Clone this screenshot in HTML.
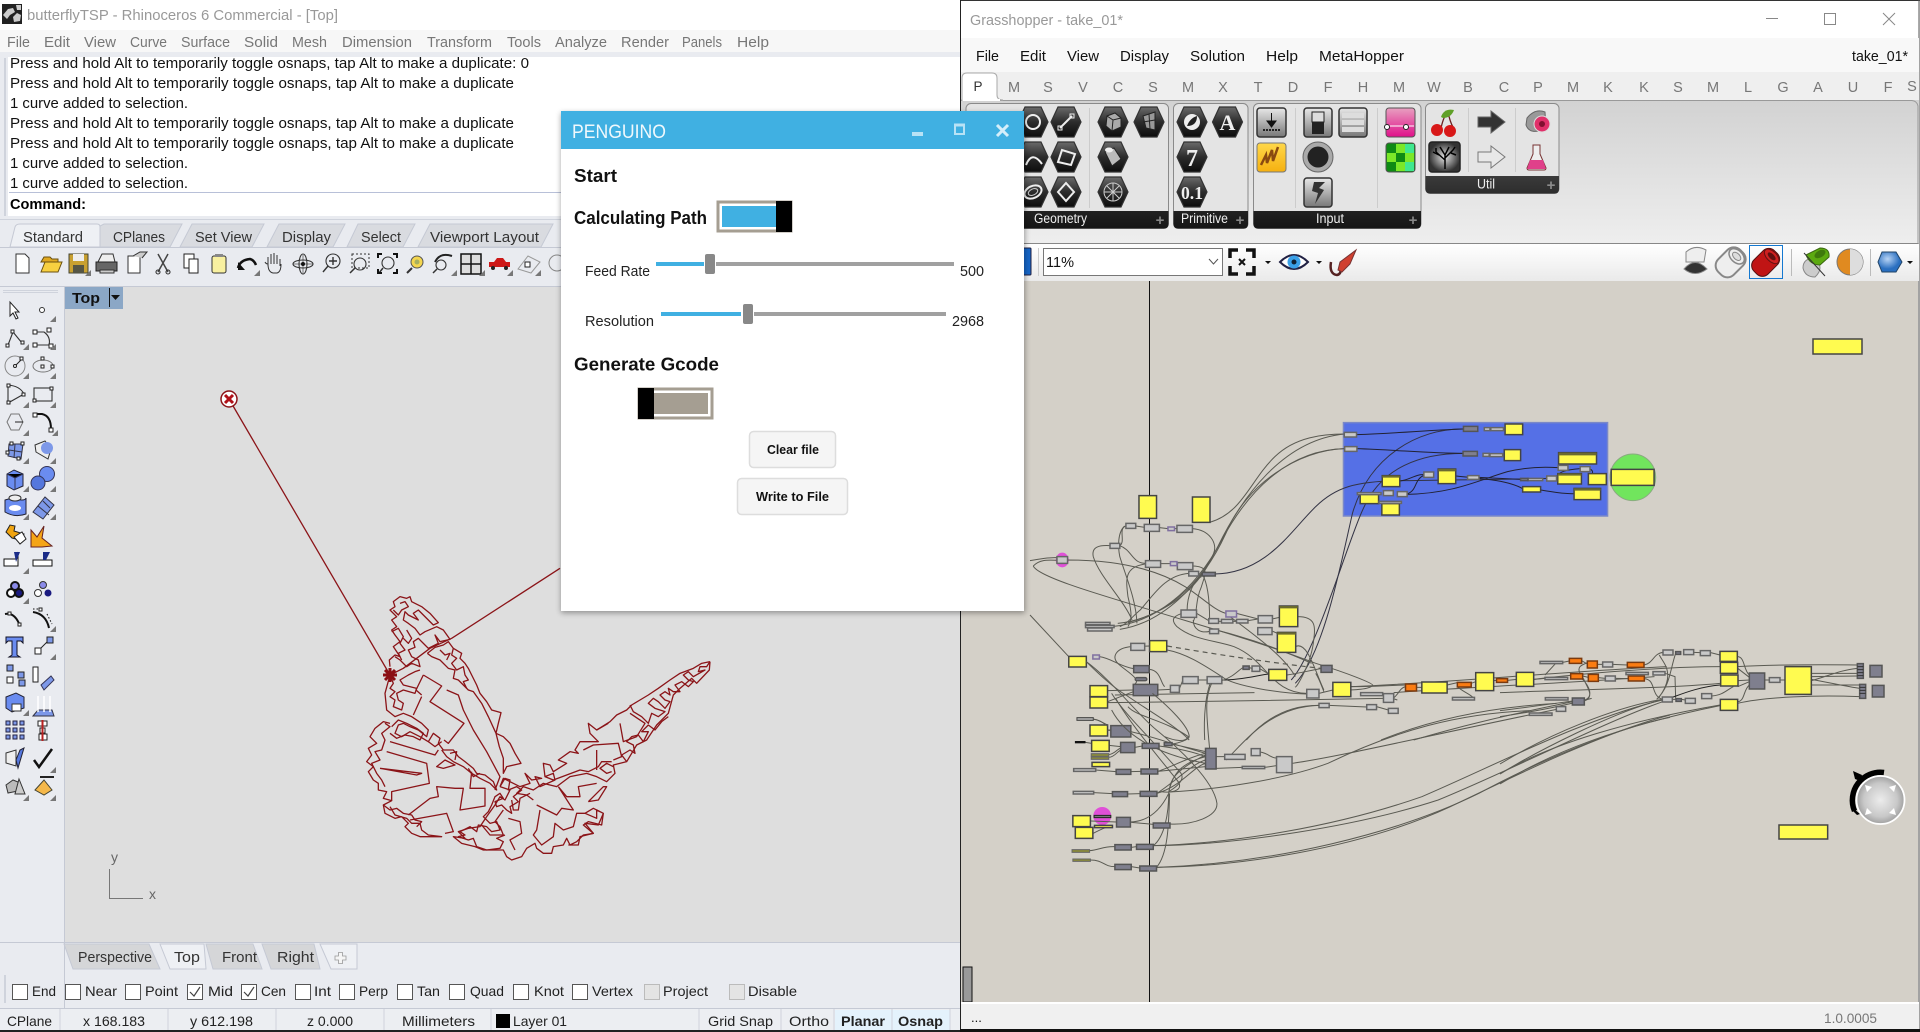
<!DOCTYPE html>
<html><head><meta charset="utf-8"><title>Rhino and Grasshopper</title>
<style>
html,body{margin:0;padding:0;background:#e9ebf0;overflow:hidden}
svg{display:block;font-family:"Liberation Sans",sans-serif}
.z *{vector-effect:non-scaling-stroke}
.w{fill:none;stroke:#5a5a52;stroke-width:1}
.y{fill:#fffb50;stroke:#444;stroke-width:1.5}
.g{fill:#c9c9c9;stroke:#666;stroke-width:1.5}
.d{fill:#7f7f8e;stroke:#555;stroke-width:1.5}
.o{fill:#fb7c12;stroke:#7a3a10;stroke-width:1.5}
.p{fill:#c9c9c9;stroke:#8070a0;stroke-width:1.5}
.n{fill:#aaa;stroke:#444;stroke-width:1}
.v{fill:#8a8a3a;stroke:#666;stroke-width:1}
.b{fill:none;stroke:#8b1418;stroke-width:1.3;stroke-linejoin:round}
.m{fill:#777;font-size:14.5px}
.c{fill:#111;font-size:14.5px}
.t{fill:#333;font-size:14.5px}
.s{fill:#222;font-size:14px}
.l{fill:#777;font-size:14.5px;text-anchor:middle}
.i{fill:none;stroke:#333;stroke-width:1.1}
.sq{fill:#fff;stroke:#222;stroke-width:1}
.cb{fill:#fff;stroke:#555;stroke-width:1}
.f{fill:#eee;font-size:13.5px}
.pl{fill:#aaa;font-size:15px;font-weight:bold}
.h{fill:url(#hx);stroke:#333;stroke-width:1.2}
.gl{fill:none;stroke:#eee;stroke-width:2}
.ic{fill:url(#sqg);stroke:#333;stroke-width:1.5}
</style></head><body>
<svg width="1920" height="1032" viewBox="0 0 1920 1032" xmlns="http://www.w3.org/2000/svg">
<defs>
<linearGradient id="hx" x1="0" y1="0" x2="0" y2="1"><stop offset="0" stop-color="#6a6a6a"/><stop offset=".5" stop-color="#2c2c2c"/><stop offset="1" stop-color="#0c0c0c"/></linearGradient>
<linearGradient id="sqg" x1="0" y1="0" x2="0" y2="1"><stop offset="0" stop-color="#e8e8e8"/><stop offset="1" stop-color="#777"/></linearGradient>
<linearGradient id="rb" x1="0" y1="0" x2="0" y2="1"><stop offset="0" stop-color="#d2d2d2"/><stop offset="1" stop-color="#eee"/></linearGradient>
<linearGradient id="ft" x1="0" y1="0" x2="0" y2="1"><stop offset="0" stop-color="#3a3a3a"/><stop offset="1" stop-color="#151515"/></linearGradient>
<linearGradient id="tb" x1="0" y1="0" x2="0" y2="1"><stop offset="0" stop-color="#fff"/><stop offset="1" stop-color="#eaeaea"/></linearGradient>
<linearGradient id="pk" x1="0" y1="0" x2="0" y2="1"><stop offset="0" stop-color="#e8a0c0"/><stop offset="1" stop-color="#e0108a"/></linearGradient>
<linearGradient id="yl" x1="0" y1="0" x2="0" y2="1"><stop offset="0" stop-color="#ffd84a"/><stop offset="1" stop-color="#f5b010"/></linearGradient>
<radialGradient id="nav"><stop offset="0" stop-color="#ececec"/><stop offset=".7" stop-color="#c8c8c8"/><stop offset="1" stop-color="#a0a0a0"/></radialGradient>
<radialGradient id="bl" cx=".4" cy=".35"><stop offset="0" stop-color="#b8d4f5"/><stop offset="1" stop-color="#2a6fc0"/></radialGradient>
<radialGradient id="tg"><stop offset="0" stop-color="#e4e4e4"/><stop offset="1" stop-color="#333"/></radialGradient>
<filter id="sh" x="-5%" y="-5%" width="110%" height="110%"><feGaussianBlur stdDeviation="3"/></filter>
<polygon id="tr" points="6,0 6,6 0,6" fill="#777"/>
<polygon id="hex" class="h" points="-15,0 -8,-15 8,-15 15,0 8,15 -8,15"/>
</defs>

<!-- RHINO WINDOW -->
<rect x="0" y="0" width="961" height="1032" fill="#e9ebf0"/>
<rect x="0" y="0" width="961" height="30" fill="#fff"/>
<rect x="0" y="30" width="961" height="22" fill="#f7f7f7"/>
<rect x="2" y="4" width="20" height="20" fill="#222"/>
<path d="M3 15L8 9L13 8L15 12L10 15L7 19Z M13 17L17 13L21 15L20 21L14 22Z M16 5H21V10L17 10Z" fill="#ccc"/>
<text x="27" y="20" font-size="15" fill="#999" textLength="311" lengthAdjust="spacingAndGlyphs">butterflyTSP - Rhinoceros 6 Commercial - [Top]</text>
<g class="m">
<text x="7" y="47" textLength="23" lengthAdjust="spacingAndGlyphs">File</text>
<text x="44" y="47" textLength="26" lengthAdjust="spacingAndGlyphs">Edit</text>
<text x="84" y="47" textLength="32" lengthAdjust="spacingAndGlyphs">View</text>
<text x="130" y="47" textLength="37" lengthAdjust="spacingAndGlyphs">Curve</text>
<text x="181" y="47" textLength="49" lengthAdjust="spacingAndGlyphs">Surface</text>
<text x="244" y="47" textLength="34" lengthAdjust="spacingAndGlyphs">Solid</text>
<text x="292" y="47" textLength="35" lengthAdjust="spacingAndGlyphs">Mesh</text>
<text x="342" y="47" textLength="70" lengthAdjust="spacingAndGlyphs">Dimension</text>
<text x="427" y="47" textLength="65" lengthAdjust="spacingAndGlyphs">Transform</text>
<text x="507" y="47" textLength="34" lengthAdjust="spacingAndGlyphs">Tools</text>
<text x="555" y="47" textLength="52" lengthAdjust="spacingAndGlyphs">Analyze</text>
<text x="621" y="47" textLength="48" lengthAdjust="spacingAndGlyphs">Render</text>
<text x="682" y="47" textLength="40" lengthAdjust="spacingAndGlyphs">Panels</text>
<text x="737" y="47" textLength="32" lengthAdjust="spacingAndGlyphs">Help</text>
</g>
<rect x="8" y="57" width="952" height="159" fill="#fff"/>
<path d="M5 58V216" stroke="#cfd3dc" stroke-width="2"/>
<g class="c">
<text x="10" y="68" textLength="519" lengthAdjust="spacingAndGlyphs">Press and hold Alt to temporarily toggle osnaps, tap Alt to make a duplicate: 0</text>
<text x="10" y="88" textLength="504" lengthAdjust="spacingAndGlyphs">Press and hold Alt to temporarily toggle osnaps, tap Alt to make a duplicate</text>
<text x="10" y="108" textLength="178" lengthAdjust="spacingAndGlyphs">1 curve added to selection.</text>
<text x="10" y="128" textLength="504" lengthAdjust="spacingAndGlyphs">Press and hold Alt to temporarily toggle osnaps, tap Alt to make a duplicate</text>
<text x="10" y="148" textLength="504" lengthAdjust="spacingAndGlyphs">Press and hold Alt to temporarily toggle osnaps, tap Alt to make a duplicate</text>
<text x="10" y="168" textLength="178" lengthAdjust="spacingAndGlyphs">1 curve added to selection.</text>
<text x="10" y="188" textLength="178" lengthAdjust="spacingAndGlyphs">1 curve added to selection.</text>
</g>
<path d="M9 192.5H960" stroke="#b8c0d8"/>
<text x="10" y="209" font-size="14.5" font-weight="bold" fill="#000" textLength="76" lengthAdjust="spacingAndGlyphs">Command:</text>
<path d="M0 219.5H960" stroke="#cfd3dc"/>
<!-- rhino tabs -->
<path d="M100 247V226L104 224H176L182 224L170 247Z M180 247L192 224H264L252 247Z M267 247L279 224H345L333 247Z M347 247L358 224H415L403 247Z M418 247L430 224H553L541 247Z" fill="#d9dbe0" stroke="#c5c9d4"/>
<path d="M10 247L15 227Q16 224 20 224H97Q100 224 100 227V247Z" fill="#eef0f4" stroke="#c5c9d4"/>
<path d="M0 247.5H960" stroke="#c5c9d4"/>
<g class="t">
<text x="23" y="242" textLength="60" lengthAdjust="spacingAndGlyphs">Standard</text>
<text x="113" y="242" textLength="52" lengthAdjust="spacingAndGlyphs">CPlanes</text>
<text x="195" y="242" textLength="57" lengthAdjust="spacingAndGlyphs">Set View</text>
<text x="282" y="242" textLength="49" lengthAdjust="spacingAndGlyphs">Display</text>
<text x="361" y="242" textLength="40" lengthAdjust="spacingAndGlyphs">Select</text>
<text x="430" y="242" textLength="109" lengthAdjust="spacingAndGlyphs">Viewport Layout</text>
</g>
<!-- rhino toolbar -->
<g>
<path d="M16 254H25L29 258V273H16Z" fill="#fff" stroke="#333"/>
<path d="M41 262L44 257H50L52 259H58V262Z" fill="#e0a820" stroke="#6a5010"/><path d="M41 272L45 262H62L58 272Z" fill="#f8d040" stroke="#6a5010"/>
<rect x="69" y="254" width="19" height="19" fill="#c8a030" stroke="#443"/><rect x="73" y="254" width="11" height="7" fill="#eee"/><rect x="73" y="265" width="11" height="8" fill="#554"/>
<use href="#tr" x="85" y="270"/>
<path d="M98 262L102 254H113L115 262Z" fill="#eee" stroke="#333"/><rect x="96" y="262" width="21" height="9" fill="#666" stroke="#222"/><rect x="100" y="270" width="14" height="3" fill="#ccc" stroke="#333"/>
<path d="M128 256H140V273H128Z" fill="#fff" stroke="#333"/><path d="M133 256L140 252H147L142 258" fill="#ccc" stroke="#333"/>
<path d="M158 254L168 272M168 254L158 272" stroke="#444" stroke-width="1.5"/><circle cx="158" cy="272" r="2" class="i"/><circle cx="168" cy="272" r="2" class="i"/>
<rect x="184" y="254" width="10" height="14" fill="#fff" stroke="#222"/><rect x="189" y="259" width="9" height="14" fill="#fff" stroke="#222"/>
<rect x="212" y="256" width="14" height="17" rx="2" fill="#f8f0a0" stroke="#333"/><rect x="215" y="254" width="8" height="3" fill="#888"/>
<path d="M238 268Q240 260 250 259Q254 260 256 265" fill="none" stroke="#111" stroke-width="2.5"/><path d="M238 262V270H245Z" fill="#111"/><use href="#tr" x="254" y="270"/>
<path d="M268 266V257M271 264V254M274 264V253M277 264V255M280 266V259M268 264Q266 264 265 262M268 264Q268 272 273 273H277Q281 272 281 264" fill="none" stroke="#333"/>
<path d="M293 264H313M303 255V273" stroke="#777"/><ellipse cx="303" cy="264" rx="10" ry="4" class="i"/><ellipse cx="303" cy="264" rx="4" ry="10" class="i"/><circle cx="303" cy="264" r="2" fill="#111"/>
<circle cx="333" cy="261" r="7" class="i"/><path d="M328 266L323 272M329 261H337M333 257V265" stroke="#333" stroke-width="1.4"/>
<circle cx="360" cy="264" r="6" class="i"/><path d="M355 268L350 273" stroke="#333" stroke-width="1.5"/><rect x="352" y="254" width="17" height="14" fill="none" stroke="#333" stroke-dasharray="2 2"/>
<circle cx="388" cy="263" r="6" class="i"/><path d="M383 268L379 273" stroke="#333" stroke-width="1.5"/><path d="M378 258V254H382M393 254H397V258M378 269V273H382M393 273H397V269" fill="none" stroke="#111" stroke-width="2"/>
<circle cx="417" cy="262" r="6" fill="#f4d650" stroke="#555"/><circle cx="417" cy="262" r="2.500" fill="#a8b060"/><path d="M412 268L407 273" stroke="#333" stroke-width="2"/>
<path d="M435 262Q440 252 452 256" fill="none" stroke="#222" stroke-width="2"/><circle cx="441" cy="265" r="5" class="i"/><path d="M437 269L433 273" stroke="#333" stroke-width="1.5"/><use href="#tr" x="451" y="270"/>
<rect x="461" y="254" width="20" height="20" fill="#ddd" stroke="#111" stroke-width="1.5"/><path d="M471 254V274M461 264H481" stroke="#111" stroke-width="1.5"/><use href="#tr" x="479" y="270"/>
<path d="M489 267V262L494 262L497 258H503L506 262H510V267Z" fill="#cc1818"/><circle cx="493" cy="268" r="2" fill="#222"/><circle cx="506" cy="268" r="2" fill="#222"/><use href="#tr" x="507" y="270"/>
<path d="M518 269L528 256L540 262L531 273Z" fill="none" stroke="#999"/><rect x="525" y="262" width="5" height="5" fill="#fff" stroke="#222"/><use href="#tr" x="535" y="270"/>
<circle cx="557" cy="263" r="8" fill="none" stroke="#888"/>
</g>
<path d="M0 286.5H960" stroke="#c5c9d4"/>

<!-- Viewport -->
<rect x="64" y="287" width="897" height="655" fill="#dedede"/>
<path d="M64.5 287V1009" stroke="#c5c9d4"/>
<path d="M0 942.5H960" stroke="#c5c9d4"/>
<rect x="65" y="287" width="58" height="22" fill="#8ba7c6"/>
<text x="72" y="303" font-size="15" font-weight="bold" fill="#111" textLength="28" lengthAdjust="spacingAndGlyphs">Top</text>
<path d="M109.5 288V307" stroke="#111"/><path d="M111 295H120L115.5 300Z" fill="#111"/>
<!-- axes -->
<path d="M109.5 869V898.5H143" fill="none" stroke="#777"/>
<text x="111" y="862" font-size="14" fill="#666">y</text>
<text x="149" y="899" font-size="14" fill="#666">x</text>
<!-- butterfly -->
<path d="M229 399L390 675" class="b"/>
<circle cx="229" cy="399" r="8" fill="#fff" stroke="#8b1418" stroke-width="1.5"/>
<path d="M225 395L233 403M233 395L225 403" stroke="#b01018" stroke-width="3"/>
<g transform="translate(340 560) scale(.33333)" class="z">
<path class="b" d="M660 25L335 235L270 265L190 325L150 345"/>
<path class="b" d="M150 320L148 300L165 285L180 290L160 260L180 245L165 225L155 210L170 200L155 180L170 170L150 150L165 140L160 125L180 110L200 115L210 110L215 125L245 140L270 160L295 188L280 195L250 165L235 150L220 160L235 180L205 165L195 155L190 180L205 190L225 205L240 225L255 215L290 200L310 210L330 238L300 245L285 225L295 250L265 265L255 255L235 235L220 245L225 262L205 270L215 290L235 300L240 320L215 310L200 320L180 300L165 290"/>
<path class="b" d="M160 150L175 165L185 150L205 140L195 125L180 130M155 215L175 205L190 230L180 250L195 270L175 280L185 300M200 210L215 235L205 250L190 235"/>
<path class="b" d="M262 280L285 262L310 255L325 245L340 265L365 280L360 295L375 310L385 325L395 345L410 375L420 400L440 425L455 450L483 458L475 490L468 520L490 530L510 550L525 580L543 610L500 620L490 640L490 595L478 560L468 520L445 470L425 430L400 395L385 390L370 375L355 360L340 355L345 330L325 325L300 300L275 290L262 280"/>
<path class="b" d="M340 265L335 285L350 295L335 310L350 330L370 320L375 345L385 360L370 365L380 385M300 270L315 285L330 280L320 300"/>
<path class="b" d="M150 345L135 400L140 450L165 470L190 460L215 470L245 490L265 510L260 530L235 510L210 500L190 490L175 495L165 520L185 530L210 515L240 530L265 545L280 520L300 535L295 550L310 570L340 570L355 590L375 605L400 625L410 640L435 645L460 665L470 690L450 670L420 655L395 640L370 620L340 605L320 590L305 570"/>
<path class="b" d="M155 500L175 480L200 490L230 505L250 520L240 540L220 530L195 525L170 535L150 520M265 545L285 560L305 545M330 580L350 575L345 600M385 625L400 650L420 640"/>
<path class="b" d="M150 345L160 370L150 385L165 395L150 410L165 420L160 440L185 450L190 430L175 420L170 400L190 390L225 400L230 385L190 375L180 360L205 345L225 335L240 330"/>
<path class="b" d="M250 345L305 378L270 425L372 490L325 550L312 540M250 345L228 390L245 405M245 410L220 465M320 390L355 405L370 450L400 510L440 575L480 650L465 690"/>
<path class="b" d="M150 490L130 485L105 505L90 530L110 550L85 565L95 585L80 605L100 620L85 635L100 660L115 670L115 690L140 695L130 715L155 722L130 735L135 760L165 775L185 770L205 790L195 800L215 820L240 830L305 830L265 825L245 810L240 790L215 790L200 775L165 765L150 740"/>
<path class="b" d="M135 490L150 500L125 520L135 540L125 570L105 575L120 600L95 610L110 640L125 660L135 680M130 735L150 750L170 745L190 760L215 765L225 780L245 785L230 800"/>
<path class="b" d="M150 545L285 585L295 570M140 575L260 610L268 670L155 695L155 722M120 625L245 640L230 645L120 625M205 765L270 715L295 710L290 680L345 685L370 685L360 750L435 738L435 685L390 685L395 635M210 780L320 760L340 815L315 820M290 620L315 600L345 615L310 625Z"/>
<path class="b" d="M1110 305L1085 310L1060 325L1020 340L990 360L955 385L925 405L900 420L875 435L860 450L830 465L810 485L770 510L745 490L750 520L775 545L720 545L705 570L715 580L690 575L655 600L680 610L640 635L630 615L610 610L615 650L640 640L645 660L600 680L585 650L605 655L575 660L555 640L570 670L540 680L510 665L490 655L480 680"/>
<path class="b" d="M1110 305L1108 330L1070 370L1055 355L1020 385L1000 405L985 460L950 495L920 540L890 555L860 605L820 615L825 640L800 665L770 650L740 640L690 650L650 680L610 670L580 690L550 680L530 700L560 705L580 720"/>
<path class="b" d="M1110 305L1100 320L1080 320L1075 335L1095 330L1060 350L1045 335L1030 345L1045 360L1060 365L1045 380L1025 365L1005 375L1020 395L1000 395L985 385L990 405L975 395L960 405L975 420L990 425L975 445L955 425L940 415L925 430L945 445L975 455L955 470L935 460L925 490L905 470L880 455L870 435"/>
<path class="b" d="M860 605L845 585L870 570L885 580L880 555L860 545L875 530L895 525L910 545L925 515L905 515L925 495L945 510L965 485L985 470M820 620L800 610L780 625L800 640L815 635M615 650L640 660L680 645L720 630L745 635L775 620L785 605L815 605"/>
<path class="b" d="M805 490L770 510M840 490L850 545L890 530L915 490L870 460M730 570L760 555L835 550L845 590L820 600M770 570L770 630M655 680L680 710L720 710L715 680L770 670M745 725L790 680L800 680L775 720L745 725M590 735L650 765L665 745L700 750L655 680"/>
<path class="b" d="M480 680L510 690L495 720L480 710L465 735L440 770L420 800L385 805L355 815L375 835L340 830L365 850L405 860L430 870L470 870L490 870L500 890L515 900L545 890L560 865L585 850L590 865L610 880L635 880L640 860L670 855L680 835L690 855L710 845L730 825L760 820L730 795L745 785L785 795L790 760L770 750L770 775L735 760L710 760L700 800L670 810L645 790L640 830L605 855L580 825L590 810L600 750M505 775L540 785L545 820L510 840L525 870"/>
<path class="b" d="M480 680L495 655L510 660L505 690L530 680L545 690L520 710L535 725L510 740L515 760L500 750L485 735L470 740L465 725L490 715L480 700L465 710L455 735L445 755L430 770L450 790L470 785L480 810L455 815L440 800L415 795L410 815L390 800L360 815L375 825L355 830L385 840L400 835L410 860L440 870L480 865L490 845L470 835L495 825"/>
<path class="b" d="M515 720L520 750L535 750L540 715L570 700M425 795L450 825L490 825L480 800L465 785L490 750M735 760L760 745L780 755M790 760L775 795L735 790L760 820L720 830L715 855L685 855"/>
</g>
<path d="M385 670L395 680M395 670L385 680M383 675H397M390 668V682" stroke="#8b0f14" stroke-width="3"/>

<!-- sidebar -->
<path d="M3 290.5H58M3 292.5H58" stroke="#cfd3dc"/>
<g>
<path d="M10 302V316L13 313L16 319L18 318L15 312H19Z" fill="#fff" stroke="#222"/>
<circle cx="42" cy="310" r="2.5" fill="#fff" stroke="#333"/><use href="#tr" x="50" y="316"/>
<path d="M8 345L13 332L22 343" class="i"/><rect x="6" y="344" width="3" height="3" class="sq"/><rect x="11" y="330" width="3" height="3" class="sq"/><rect x="21" y="341" width="3" height="3" class="sq"/><use href="#tr" x="23" y="344"/>
<path d="M36 332H44Q51 337 49 345H36" class="i"/><rect x="33" y="330" width="4" height="4" class="sq"/><rect x="47" y="328" width="4" height="4" class="sq"/><rect x="33" y="343" width="4" height="4" class="sq"/><rect x="49" y="344" width="4" height="4" class="sq"/><use href="#tr" x="50" y="344"/>
<circle cx="15" cy="366" r="10" fill="none" stroke="#888"/><path d="M15 366L22 359" stroke="#222"/><circle cx="15" cy="366" r="1.5" class="sq"/><rect x="20" y="357" width="3" height="3" class="sq"/><use href="#tr" x="23" y="373"/>
<ellipse cx="43" cy="366" rx="10" ry="6" fill="none" stroke="#777"/><rect x="41" y="357" width="3" height="3" class="sq"/><rect x="41" y="365" width="3" height="3" class="sq"/><rect x="51" y="365" width="3" height="3" class="sq"/><use href="#tr" x="50" y="373"/>
<path d="M8 385Q20 386 24 394L8 403Z" class="i"/><rect x="7" y="384" width="3" height="3" class="sq"/><rect x="22" y="393" width="3" height="3" class="sq"/><rect x="7" y="401" width="3" height="3" class="sq"/><use href="#tr" x="23" y="402"/>
<rect x="34" y="388" width="18" height="13" class="i"/><rect x="33" y="399" width="3" height="3" class="sq"/><rect x="50" y="387" width="3" height="3" class="sq"/><use href="#tr" x="50" y="402"/>
<path d="M7 422L11 414H19L23 422L19 430H11Z" fill="none" stroke="#777"/><path d="M15 422H23" stroke="#222"/><use href="#tr" x="23" y="430"/>
<path d="M35 414H42Q51 416 51 429" fill="none" stroke="#111" stroke-width="2"/><rect x="33" y="413" width="4" height="4" class="sq"/><rect x="49" y="428" width="4" height="4" class="sq"/><use href="#tr" x="52" y="430"/>
<path d="M9 444H23L21 459L8 456Z" fill="#7d98e8" stroke="#334"/><path d="M9 450L22 452M15 444L14 458" stroke="#334"/><rect x="6" y="451" width="3" height="3" class="sq"/><rect x="10" y="442" width="3" height="3" class="sq"/><rect x="21" y="442" width="3" height="3" class="sq"/><rect x="17" y="457" width="3" height="3" class="sq"/><use href="#tr" x="23" y="458"/>
<path d="M35 445L45 441L51 449L48 459L36 452Z" fill="#eee" stroke="#333"/><circle cx="47" cy="448" r="6" fill="#7d98e8"/><use href="#tr" x="50" y="458"/>
<path d="M7 474L14 470L23 474V486L14 490L7 486Z" fill="#6a8cf0" stroke="#223"/><path d="M7 474L15 478L23 474M15 478V490" stroke="#335"/><use href="#tr" x="23" y="486"/>
<circle cx="47" cy="474" r="7.5" fill="#6a8cf0" stroke="#335"/><circle cx="38" cy="483" r="7" fill="#5577dd" stroke="#335"/><use href="#tr" x="50" y="486"/>
<path d="M5 500L12 498Q25 502 26 498V514Q15 518 5 512Z" fill="#6a8cf0" stroke="#223"/><ellipse cx="15" cy="508" rx="6" ry="3" fill="#fff"/><ellipse cx="15" cy="498" rx="6" ry="3" fill="#eee" stroke="#333"/><use href="#tr" x="23" y="514"/>
<path d="M33 512L45 497L54 505L43 519Z" fill="#7d98e8" stroke="#334"/><path d="M38 506L49 515M43 501L50 508" stroke="#334"/><use href="#tr" x="50" y="514"/>
<path d="M6 532L10 525L15 526L14 531L24 534L20 540L12 538Z" fill="#f0a410" stroke="#222"/><path d="M14 537L22 532L26 539L20 544Z" fill="#fff" stroke="#222"/>
<path d="M31 547V530L37 537L44 526L42 538L52 546L42 547Z" fill="#f5a518" stroke="#622"/>
<path d="M4 559H16L18 552V566H4Z" fill="#fff" stroke="#111"/><path d="M14 552L20 552L16 562Z" fill="#1a2c88"/><use href="#tr" x="23" y="568"/>
<path d="M33 560H52V566H33Z" fill="#fff" stroke="#111"/><path d="M43 552L50 552L46 560H43Z" fill="#1a2c88"/>
<circle cx="15" cy="586" r="4" fill="#8a8ae8" stroke="#111" stroke-width="2"/><circle cx="11" cy="593" r="4" fill="#fff" stroke="#111" stroke-width="2"/><circle cx="19" cy="593" r="4" fill="#1a1a80" stroke="#111" stroke-width="2"/><use href="#tr" x="23" y="598"/>
<circle cx="43" cy="585" r="3.5" fill="#8a8ae8" stroke="#333"/><circle cx="38" cy="593" r="3.5" fill="#fff" stroke="#333"/><circle cx="48" cy="593" r="3.5" fill="#1a1a80"/>
<path d="M5 614Q15 612 20 626" fill="none" stroke="#111" stroke-width="2"/><rect x="8" y="612" width="3" height="3" class="sq"/><rect x="18" y="623" width="3" height="3" class="sq"/>
<path d="M33 612Q46 614 49 628" fill="none" stroke="#111" stroke-width="2"/><path d="M33 609H41M47 614L52 624" stroke="#111" stroke-dasharray="1.5 2"/><rect x="39" y="608" width="3" height="3" class="sq"/><use href="#tr" x="50" y="626"/>
<path d="M6 637H23V643L21 641H17V655L20 657H9L12 655V641H8L6 643Z" fill="#6a8cf0" stroke="#112"/>
<rect x="35" y="648" width="6" height="6" class="sq"/><rect x="47" y="637" width="6" height="6" fill="#7d98e8" stroke="#222"/><path d="M41 648L47 642" stroke="#222"/><use href="#tr" x="50" y="654"/>
<rect x="7" y="665" width="6" height="6" fill="#7d98e8" stroke="#222"/><rect x="18" y="672" width="6" height="6" fill="#7d98e8" stroke="#222"/><rect x="7" y="677" width="6" height="6" class="sq"/><rect x="19" y="680" width="6" height="6" fill="#7d98e8" stroke="#222"/>
<rect x="33" y="667" width="5" height="15" class="sq"/><path d="M41 685L51 676L54 680L44 690Z" fill="#7d98e8" stroke="#335"/>
<path d="M6 697L16 693L24 697V708L12 712L6 708Z" fill="#6a8cf0" stroke="#223"/><rect x="12" y="704" width="9" height="7" fill="#fff" stroke="#333"/><use href="#tr" x="23" y="710"/>
<path d="M33 716L38 710H52L54 716Z" fill="#7d98e8" stroke="#334"/><path d="M38 696V712M44 696V712M50 696V712" stroke="#fff" stroke-width="1.5"/>
<g fill="#7d98e8" stroke="#224"><rect x="6" y="721" width="4" height="4"/><rect x="13" y="721" width="4" height="4"/><rect x="20" y="721" width="4" height="4"/><rect x="6" y="728" width="4" height="4"/><rect x="13" y="728" width="4" height="4"/><rect x="20" y="728" width="4" height="4"/><rect x="6" y="735" width="4" height="4"/><rect x="13" y="735" width="4" height="4"/><rect x="20" y="735" width="4" height="4"/></g>
<rect x="38" y="721" width="9" height="5" class="sq"/><rect x="40" y="728" width="5" height="5" class="sq"/><rect x="39" y="734" width="8" height="6" class="sq"/><path d="M42.5 720V741" stroke="#b82020" stroke-width="2"/>
<path d="M6 753L16 750V766L6 763Z" fill="#eee" stroke="#333"/><path d="M16 760L20 750L24 748L18 768Z" fill="#5577dd" stroke="#223"/>
<path d="M34 760L39 767L52 749" fill="none" stroke="#111" stroke-width="2.5"/><use href="#tr" x="50" y="767"/>
<path d="M6 785L13 780L18 782V791L8 793Z" fill="#bbb" stroke="#333"/><path d="M19 779L25 794H15Z" fill="#ccc" stroke="#333"/><use href="#tr" x="23" y="795"/>
<path d="M35 790L44 780L52 790L44 795Z" fill="#f5b84a" stroke="#443"/><path d="M40 777H54" stroke="#222" stroke-width="2"/><use href="#tr" x="50" y="795"/>
</g>

<!-- bottom tabs -->
<path d="M64 944H149L160 969H73Z M206 944H253L262 969H213Z M262 944H314L320 969H271Z" fill="#d5d6d8" stroke="#c5c9d4"/>
<path d="M160 944H204L206 969H170Z M320 944H357V969H331Z" fill="#eef0f4" stroke="#c5c9d4"/>
<g class="t" fill="#444">
<text x="78" y="962" textLength="74" lengthAdjust="spacingAndGlyphs">Perspective</text>
<text x="174" y="962" textLength="26" lengthAdjust="spacingAndGlyphs">Top</text>
<text x="222" y="962" textLength="35" lengthAdjust="spacingAndGlyphs">Front</text>
<text x="277" y="962" textLength="37" lengthAdjust="spacingAndGlyphs">Right</text>
</g>
<path d="M338.500 952.500H342.500V956H346V960H342.500V963.500H338.500V960H335V956H338.500Z" fill="#f5f5f5" stroke="#999" stroke-width=".8"/>

<!-- osnaps -->
<path d="M5 975V1003" stroke="#cfd3dc" stroke-width="2"/>
<g>
<rect class="cb" x="12.5" y="984.500" width="15" height="15"/><rect class="cb" x="65.5" y="984.500" width="15" height="15"/><rect class="cb" x="125.5" y="984.500" width="15" height="15"/><rect class="cb" x="187.5" y="984.500" width="15" height="15"/><rect class="cb" x="241.5" y="984.500" width="15" height="15"/><rect class="cb" x="295.5" y="984.500" width="15" height="15"/><rect class="cb" x="339.5" y="984.500" width="15" height="15"/><rect class="cb" x="397.5" y="984.500" width="15" height="15"/><rect class="cb" x="449.5" y="984.500" width="15" height="15"/><rect class="cb" x="513.5" y="984.500" width="15" height="15"/><rect class="cb" x="572.5" y="984.500" width="15" height="15"/>
<rect x="644.5" y="984.500" width="15" height="15" fill="#e4e4e4" stroke="#bbb"/><rect x="729.5" y="984.500" width="15" height="15" fill="#e4e4e4" stroke="#bbb"/>
<path d="M190 992L194 996L200 987M244 992L248 996L254 987" fill="none" stroke="#444" stroke-width="1.2"/>
</g>
<g class="s" fill="#333">
<text x="32" y="996" textLength="24" lengthAdjust="spacingAndGlyphs">End</text>
<text x="85" y="996" textLength="32" lengthAdjust="spacingAndGlyphs">Near</text>
<text x="145" y="996" textLength="33" lengthAdjust="spacingAndGlyphs">Point</text>
<text x="208" y="996" textLength="25" lengthAdjust="spacingAndGlyphs">Mid</text>
<text x="261" y="996" textLength="25" lengthAdjust="spacingAndGlyphs">Cen</text>
<text x="314" y="996" textLength="17" lengthAdjust="spacingAndGlyphs">Int</text>
<text x="359" y="996" textLength="29" lengthAdjust="spacingAndGlyphs">Perp</text>
<text x="417" y="996" textLength="23" lengthAdjust="spacingAndGlyphs">Tan</text>
<text x="470" y="996" textLength="34" lengthAdjust="spacingAndGlyphs">Quad</text>
<text x="534" y="996" textLength="30" lengthAdjust="spacingAndGlyphs">Knot</text>
<text x="592" y="996" textLength="41" lengthAdjust="spacingAndGlyphs">Vertex</text>
<text x="663" y="996" textLength="45" lengthAdjust="spacingAndGlyphs">Project</text>
<text x="748" y="996" textLength="49" lengthAdjust="spacingAndGlyphs">Disable</text>
</g>

<!-- status bar -->
<rect x="0" y="1009" width="960" height="21" fill="#eceef2"/>
<path d="M0 1008.500H960" stroke="#c5c9d4"/>
<rect x="835" y="1010" width="115" height="20" fill="#e4f2fc"/>
<path d="M60 1009V1030M168 1009V1030M276 1009V1030M384 1009V1030M491 1009V1030M699 1009V1030M781 1009V1030M834 1009V1030M892 1009V1030M950 1009V1030" stroke="#cfd3dc"/>
<g class="s" fill="#222">
<text x="7" y="1026" textLength="45" lengthAdjust="spacingAndGlyphs">CPlane</text>
<text x="83" y="1026" textLength="62" lengthAdjust="spacingAndGlyphs">x 168.183</text>
<text x="190" y="1026" textLength="63" lengthAdjust="spacingAndGlyphs">y 612.198</text>
<text x="307" y="1026" textLength="46" lengthAdjust="spacingAndGlyphs">z 0.000</text>
<text x="402" y="1026" textLength="73" lengthAdjust="spacingAndGlyphs">Millimeters</text>
<text x="513" y="1026" textLength="54" lengthAdjust="spacingAndGlyphs">Layer 01</text>
<text x="708" y="1026" textLength="65" lengthAdjust="spacingAndGlyphs">Grid Snap</text>
<text x="789" y="1026" textLength="40" lengthAdjust="spacingAndGlyphs">Ortho</text>
<text x="841" y="1026" textLength="44" lengthAdjust="spacingAndGlyphs" font-weight="bold">Planar</text>
<text x="898" y="1026" textLength="45" lengthAdjust="spacingAndGlyphs" font-weight="bold">Osnap</text>
</g>
<rect x="496" y="1014" width="14" height="14" fill="#000"/>

<!-- GRASSHOPPER WINDOW -->
<rect x="961" y="0" width="959" height="1032" fill="#f0f0f0"/>
<rect x="961" y="1" width="958" height="37" fill="#fff"/>
<path d="M960 0.500H1920" stroke="#333"/>
<path d="M960.500 0V1032" stroke="#222"/>
<path d="M1919 0V1032" stroke="#555" stroke-width="1"/>
<text x="970" y="25" font-size="15" fill="#999" textLength="153" lengthAdjust="spacingAndGlyphs">Grasshopper - take_01*</text>
<path d="M1766 18.500H1778" stroke="#888"/><rect x="1824.500" y="13.500" width="11" height="11" fill="none" stroke="#888"/><path d="M1883 13L1895 25M1895 13L1883 25" stroke="#888"/>
<rect x="961" y="38" width="958" height="34" fill="#f8f8f8"/>
<g class="c" fill="#222">
<text x="976" y="61" textLength="23" lengthAdjust="spacingAndGlyphs">File</text>
<text x="1020" y="61" textLength="26" lengthAdjust="spacingAndGlyphs">Edit</text>
<text x="1067" y="61" textLength="32" lengthAdjust="spacingAndGlyphs">View</text>
<text x="1120" y="61" textLength="49" lengthAdjust="spacingAndGlyphs">Display</text>
<text x="1190" y="61" textLength="55" lengthAdjust="spacingAndGlyphs">Solution</text>
<text x="1266" y="61" textLength="32" lengthAdjust="spacingAndGlyphs">Help</text>
<text x="1319" y="61" textLength="85" lengthAdjust="spacingAndGlyphs">MetaHopper</text>
<text x="1852" y="61" textLength="56" lengthAdjust="spacingAndGlyphs">take_01*</text>
</g>
<rect x="961" y="72" width="958" height="28" fill="#efefef"/>
<rect x="961" y="100" width="958" height="143" fill="url(#rb)"/>
<path d="M961 100.500H1912Q1917 101 1918 106V243" fill="none" stroke="#999"/>
<path d="M962 100V78Q962 73 967 73H992Q997 73 997 78V95Q997 100 1003 100H961Z" fill="#fff" stroke="#aaa"/>
<path d="M962.500 100H1000" stroke="#fff" stroke-width="2"/>
<text x="978" y="91" font-size="13.500" fill="#333" text-anchor="middle">P</text>
<g class="l">
<text x="1014" y="92">M</text><text x="1048" y="92">S</text><text x="1083" y="92">V</text><text x="1118" y="92">C</text><text x="1153" y="92">S</text><text x="1188" y="92">M</text><text x="1223" y="92">X</text><text x="1258" y="92">T</text><text x="1293" y="92">D</text><text x="1328" y="92">F</text><text x="1363" y="92">H</text><text x="1399" y="92">M</text><text x="1434" y="92">W</text><text x="1468" y="92">B</text><text x="1504" y="92">C</text><text x="1538" y="92">P</text><text x="1573" y="92">M</text><text x="1608" y="92">K</text><text x="1644" y="92">K</text><text x="1678" y="92">S</text><text x="1713" y="92">M</text><text x="1748" y="92">L</text><text x="1783" y="92">G</text><text x="1818" y="92">A</text><text x="1853" y="92">U</text><text x="1888" y="92">F</text><text x="1912" y="91">S</text>
</g>
<!-- panels -->
<g fill="#e4e4e4" stroke="#8a8a8a">
<rect x="966" y="103.500" width="202.500" height="125" rx="5"/>
<rect x="1173.500" y="103.500" width="74.500" height="125" rx="5"/>
<rect x="1253.500" y="103.500" width="167.500" height="125" rx="5"/>
<rect x="1425.500" y="103.500" width="133.500" height="90" rx="5"/>
</g>
<path d="M966 211H1168.500V224Q1168.500 228.500 1164 228.500H970Q966 228.500 966 224Z M1173.500 211H1248V224Q1248 228.500 1244 228.500H1178Q1173.500 228.500 1173.500 224Z M1253.500 211H1421V224Q1421 228.500 1417 228.500H1258Q1253.500 228.500 1253.500 224Z M1425.500 176H1559V189Q1559 193.500 1555 193.500H1430Q1425.500 193.500 1425.500 189Z" fill="url(#ft)"/>
<g class="f">
<text x="1034" y="223" textLength="53" lengthAdjust="spacingAndGlyphs">Geometry</text>
<text x="1181" y="223" textLength="47" lengthAdjust="spacingAndGlyphs">Primitive</text>
<text x="1316" y="223" textLength="28" lengthAdjust="spacingAndGlyphs">Input</text>
<text x="1477" y="188.500" textLength="18" lengthAdjust="spacingAndGlyphs">Util</text>
</g>
<g class="pl" text-anchor="middle"><text x="1160" y="225" opacity=".75">+</text><text x="1240" y="225" opacity=".75">+</text><text x="1413" y="225" opacity=".75">+</text><text x="1551" y="190" opacity=".75">+</text></g>
<path d="M1089.500 108V208M1295.500 108V208M1377.500 108V208M1468.500 108V172M1515.500 108V172" stroke="#ccc"/>
<!-- hex icons -->
<g>
<use href="#hex" x="1033" y="122"/><circle cx="1033" cy="122" r="7" class="gl"/>
<use href="#hex" x="1066" y="122"/><path d="M1060 128L1072 116" class="gl"/><rect x="1058" y="126" width="4" height="4" fill="none" stroke="#eee"/><rect x="1070" y="114" width="4" height="4" fill="none" stroke="#eee"/>
<use href="#hex" x="1113" y="122"/><path d="M1107 116L1115 113L1121 118V127L1112 131L1106 126Z" fill="#aaa" stroke="#222"/><path d="M1107 116L1113 120L1121 118M1113 120L1112 131" stroke="#222" fill="none"/>
<use href="#hex" x="1149" y="122"/><path d="M1143 116L1155 112V130L1146 128Z" fill="#999" stroke="#222"/><path d="M1143 122L1155 120M1149 114L1150 129" stroke="#222"/>
<use href="#hex" x="1033" y="157"/><path d="M1026 165Q1032 150 1042 164" class="gl"/>
<use href="#hex" x="1066" y="157"/><path d="M1058 162L1062 150L1075 154L1071 165Z" class="gl"/>
<use href="#hex" x="1113" y="157"/><path d="M1105 152L1114 148L1121 159L1112 166Z" fill="#bbb" stroke="#222"/><ellipse cx="1109" cy="150" rx="4" ry="2.500" fill="#eee"/>
<use href="#hex" x="1033" y="192"/><ellipse cx="1033" cy="192" rx="9" ry="6" transform="rotate(-25 1033 192)" class="gl" stroke-width="1.200"/><ellipse cx="1033" cy="192" rx="5" ry="3" transform="rotate(-25 1033 192)" fill="none" stroke="#ccc"/>
<use href="#hex" x="1066" y="192"/><path d="M1066 183L1074 192L1066 201L1058 192Z" class="gl"/>
<use href="#hex" x="1113" y="192"/><circle cx="1113" cy="192" r="9" fill="none" stroke="#ccc"/><path d="M1104 192H1122M1113 183V201M1107 186L1119 198M1119 186L1107 198" stroke="#ccc"/>
<use href="#hex" x="1192" y="122"/><circle cx="1192" cy="122" r="8" fill="#eee"/><path d="M1187 126Q1190 118 1197 116Q1197 126 1187 126Z" fill="#222"/>
<use href="#hex" x="1227.500" y="122"/><text x="1227.500" y="130" font-size="22" font-family="Liberation Serif" font-weight="bold" fill="#eee" text-anchor="middle">A</text>
<use href="#hex" x="1192" y="157"/><text x="1192" y="166" font-size="24" font-family="Liberation Serif" font-weight="bold" fill="#eee" text-anchor="middle">7</text>
<use href="#hex" x="1192" y="192"/><text x="1192" y="199" font-size="18" font-family="Liberation Serif" font-weight="bold" fill="#eee" text-anchor="middle" textLength="22" lengthAdjust="spacingAndGlyphs">0.1</text>
</g>
<!-- input icons -->
<rect x="1257" y="108" width="29" height="29" rx="3" class="ic"/><path d="M1271.500 113V125M1267 121H1276L1271.500 127Z" fill="#111" stroke="#111"/><path d="M1263 130H1280" stroke="#222" stroke-width="2" stroke-dasharray="2 1"/>
<rect x="1257" y="143" width="29" height="29" rx="3" fill="url(#yl)" stroke="#777"/><path d="M1261 165L1266 155L1267 163L1272 150L1273 161L1278 147" fill="none" stroke="#8a4a10" stroke-width="2.500"/>
<rect x="1304" y="108" width="28" height="29" rx="3" class="ic"/><rect x="1312" y="112" width="12" height="22" fill="#222"/><rect x="1312" y="112" width="12" height="10" fill="#ddd" stroke="#222"/>
<rect x="1339" y="108" width="28" height="29" rx="3" class="ic"/><rect x="1342" y="113" width="22" height="5" fill="#ddd"/><rect x="1342" y="120" width="22" height="5" fill="#ddd"/><rect x="1342" y="127" width="22" height="5" fill="#ddd"/>
<circle cx="1318" cy="157" r="15" fill="#aaa" stroke="#666"/><circle cx="1318" cy="157" r="10.500" fill="#222"/>
<rect x="1304" y="178" width="28" height="29" rx="3" class="ic"/><path d="M1314 182H1325L1319 188L1324 190L1315 204L1318 193L1312 191Z" fill="#333"/>
<rect x="1386" y="108" width="29" height="29" rx="3" fill="url(#pk)" stroke="#555"/><path d="M1387 126H1414" stroke="#fff"/><circle cx="1387" cy="127" r="2.500" fill="#fff" stroke="#222"/><circle cx="1406" cy="127" r="2.500" fill="#fff" stroke="#222"/>
<rect x="1386" y="143" width="29" height="29" rx="3" fill="#0e8a14" stroke="#555"/>
<path d="M1396 144H1405V153H1396ZM1387 153H1396V162H1387ZM1405 153H1414V162H1405ZM1396 162H1405V171H1396Z" fill="#7be828"/>
<path d="M1405 144H1414V153H1405ZM1405 162H1414V171H1405Z" fill="#3fe890"/>
<!-- util icons -->
<path d="M1441 128Q1444 115 1448 112M1448 112Q1450 122 1453 127" fill="none" stroke="#6a2020" stroke-width="1.300"/><path d="M1441 117Q1444 108 1454 110Q1451 118 1443 118Z" fill="#60a028"/><circle cx="1437" cy="130" r="6" fill="#d81818"/><circle cx="1450" cy="131" r="6" fill="#d81818"/>
<path d="M1478 117H1491V111L1505 122L1491 133V127H1478Z" fill="#333" stroke="#666"/>
<path d="M1527 118Q1535 108 1545 112L1546 128Q1530 136 1526 125Z" fill="#999" stroke="#666"/><circle cx="1542" cy="124" r="8" fill="#e0306a" stroke="#ddd"/><circle cx="1542" cy="124" r="3" fill="#801030"/>
<rect x="1429" y="142" width="31" height="30" rx="3" fill="url(#tg)" stroke="#222" stroke-width="1.500"/><path d="M1445 169V154M1445 160L1436 152M1445 158L1453 150M1445 155L1440 147M1445 155L1449 147M1439 155L1433 152M1451 153L1456 155M1436 152L1436 148M1453 150L1455 147" stroke="#000" stroke-width="1.500" fill="none"/>
<path d="M1478 152H1491V146L1505 157L1491 168V162H1478Z" fill="#e8e8e8" stroke="#777"/>
<path d="M1533 145H1540V154L1546 168Q1546 170 1544 170H1529Q1527 170 1527 168L1533 154Z" fill="#eee" stroke="#733"/><path d="M1530 160H1543L1546 169H1527Z" fill="#e0408a"/>
<!-- GH toolbar -->
<rect x="961" y="244" width="958" height="37" fill="url(#tb)"/>
<path d="M961 243.500H1918" stroke="#888"/>
<rect x="1022" y="248" width="9" height="27" rx="1" fill="#1666c8" stroke="#224"/>
<path d="M1038.500 248V276" stroke="#ccc"/>
<rect x="1043.500" y="248.500" width="179" height="27" fill="#fff" stroke="#777"/>
<text x="1046" y="267" font-size="15" fill="#111" textLength="28" lengthAdjust="spacingAndGlyphs">11%</text>
<path d="M1209 259L1213.500 264L1218 259" fill="none" stroke="#555"/>
<path d="M1230 258V250H1238M1246 250H1254V258M1230 266V274H1238M1246 274H1254V266" fill="none" stroke="#111" stroke-width="3.500"/><path d="M1239 259L1245 265M1245 259L1239 265" stroke="#111" stroke-width="2"/>
<path d="M1265 261H1271L1268 264Z M1316 261H1322L1319 264Z M1907 261H1913L1910 264Z" fill="#111"/>
<path d="M1280 262Q1294 248 1308 262Q1294 276 1280 262Z" fill="#fff" stroke="#224" stroke-width="2"/><circle cx="1294" cy="262" r="6.500" fill="#3aa0e8"/><circle cx="1294" cy="262" r="2.500" fill="#123"/>
<path d="M1331 262Q1329 274 1337 275Q1342 274 1340 267" fill="none" stroke="#522" stroke-width="2.500"/><path d="M1338 270L1340 262L1356 250L1350 264L1342 272Z" fill="#d04030" stroke="#733"/>
<path d="M1686 252Q1695 244 1706 250L1704 262H1686Z" fill="#eee" stroke="#888"/><path d="M1684 269Q1695 256 1707 269Q1695 278 1684 269Z" fill="#333" stroke="#888"/>
<g transform="rotate(-45 1731 262)"><rect x="1715" y="251" width="31" height="22" rx="9" fill="#eee" stroke="#888" stroke-width="2"/><ellipse cx="1739" cy="262" rx="6" ry="9" fill="none" stroke="#888" stroke-width="1.500"/><ellipse cx="1739" cy="262" rx="3" ry="5" fill="#ddd" stroke="#888"/></g>
<rect x="1749.500" y="245.500" width="33" height="33" fill="none" stroke="#1478d0"/>
<g transform="rotate(-45 1766 262)"><rect x="1751" y="252" width="29" height="20" rx="8" fill="#c01414" stroke="#511"/><ellipse cx="1774" cy="262" rx="5" ry="9" fill="#d02020" stroke="#611"/><ellipse cx="1774" cy="262" rx="2.500" ry="5" fill="#601010"/></g>
<path d="M1791.500 249V276M1870.500 249V276" stroke="#bbb"/>
<path d="M1803 268Q1803 258 1815 258Q1825 268 1815 277Q1805 277 1803 268Z" fill="#ccc" stroke="#888"/><path d="M1806 255L1820 248Q1830 248 1829 257L1820 265Q1810 265 1806 255Z" fill="#5caa10" stroke="#3a6810"/><ellipse cx="1820" cy="254" rx="6" ry="3.500" transform="rotate(-30 1820 254)" fill="#3f7a0c"/><path d="M1804 253L1825 276" stroke="#333"/>
<circle cx="1850" cy="262" r="13" fill="#e08a20" stroke="#777"/><path d="M1850 249A13 13 0 0 1 1850 275Z" fill="#ddd"/>
<polygon points="1882,252 1896,252 1902,262 1896,272 1882,272 1878,262" fill="url(#bl)" stroke="#246"/>

<!-- CANVAS -->
<rect x="961" y="281" width="957" height="721" fill="#d4d0c8"/>
<path d="M1149.500 281V1002" stroke="#111"/>
<rect x="1813" y="339" width="49" height="15" class="y"/>
<rect x="963" y="967" width="9" height="35" fill="#999" stroke="#111"/>
<rect x="961" y="1002" width="958" height="2" fill="#fff"/>
<rect x="961" y="1004" width="958" height="25" fill="#f0f0f0"/>
<text x="971" y="1022" font-size="13" fill="#111">...</text>
<text x="1824" y="1023" font-size="14" fill="#777" textLength="53" lengthAdjust="spacingAndGlyphs">1.0.0005</text>
<rect x="960" y="1029" width="960" height="3" fill="#111"/>
<rect x="0" y="1030" width="960" height="2" fill="#222"/>

<!-- Zoom 8 region -->
<g class="z" transform="translate(1030 400) scale(.40816 .33333)">
<rect x="768" y="68" width="647" height="280" fill="#5570e6" stroke="#7a88c8" stroke-width="1.500"/>
<ellipse cx="1477" cy="232" rx="56" ry="70" fill="#71e55d" stroke="#8aaa80"/>
<ellipse cx="79" cy="480" rx="16" ry="22" fill="#e050d8"/>
<g class="w">
<path d="M440 367C520 340 540 240 600 170C650 110 720 102 770 102"/>
<path d="M215 670C300 660 400 590 460 440C520 290 620 120 770 102"/>
<path d="M200 680C300 670 400 580 470 420C540 260 640 150 770 146"/>
<path d="M220 688C320 670 420 560 480 400C530 250 660 150 770 146"/>
<path d="M452 522C580 520 640 390 700 320C750 260 800 245 900 242C1040 240 1200 238 1266 235" stroke="#334"/>
<path d="M650 850C720 760 760 500 790 340C830 170 950 85 1062 87" stroke="#334"/>
<path d="M640 840C700 760 780 420 815 330C860 200 960 160 1061 160" stroke="#334"/>
<path d="M800 104C900 100 980 90 1062 87" stroke="#223"/>
<path d="M800 146C900 150 980 160 1061 160" stroke="#223"/>
<path d="M906 243C930 240 945 222 965 224" stroke="#223"/>
<path d="M924 282C950 270 940 240 965 226" stroke="#223"/>
<path d="M924 283C1040 280 1100 240 1170 215C1220 200 1260 200 1294 203" stroke="#223"/>
<path d="M1043 228C1100 235 1170 240 1207 266" stroke="#223"/>
<path d="M1251 270C1280 275 1300 282 1333 281" stroke="#223"/>
<path d="M1100 232L1202 238" stroke="#223"/>
<path d="M1290 228C1300 215 1310 210 1348 206M1372 207C1385 215 1375 225 1368 233" stroke="#223"/>
<path d="M0 482C30 475 50 472 66 473"/>
<path d="M8 498C30 470 60 485 92 480C200 480 300 500 380 560C420 590 450 630 480 640"/>
<path d="M8 498C20 530 160 580 290 628C400 670 550 720 700 790C780 820 840 850 840 856C830 870 790 870 740 872"/>
<path d="M155 470C150 440 170 435 196 437"/>
<path d="M155 470C170 530 230 600 250 660"/>
<path d="M220 437C235 425 215 385 235 378"/>
<path d="M220 437C250 450 250 490 283 490"/>
<path d="M232 378C215 395 215 440 220 470C235 530 260 600 262 670"/>
<path d="M259 378L280 382M317 383L338 386M354 386L360 386M317 491L344 491M360 494L361 496"/>
<path d="M398 386C440 390 460 430 450 460C430 520 380 620 240 668"/>
<path d="M399 498C440 500 430 520 420 560C405 600 410 640 400 665"/>
<path d="M283 492C230 500 235 540 240 590C250 640 250 660 240 680"/>
<path d="M389 520C330 525 300 590 270 630C250 650 240 670 220 680"/>
<path d="M422 522C440 560 440 640 440 657"/>
<path d="M385 630C385 590 400 540 420 530"/>
<path d="M370 641C350 650 345 660 360 680C400 720 450 720 500 740C560 770 580 830 620 860C640 875 660 880 678 880"/>
<path d="M408 640L438 662M400 660C400 690 420 700 440 694M462 664L469 664M497 664L506 664M534 662L559 657M506 640L559 657M593 657L611 652M593 693L606 700"/>
<path d="M462 692C520 710 600 740 690 790"/>
<path d="M656 650C700 650 700 680 695 720C690 790 650 870 650 860"/>
<path d="M650 740C680 720 700 820 720 870"/>
<path d="M480 640C520 680 620 760 650 830"/>
<path d="M250 740L293 738"/>
<path d="M336 738C440 760 600 790 713 805" stroke-dasharray="5 4" stroke-width="1.200"/>
<path d="M336 750C380 760 420 790 470 830C500 860 620 880 678 882"/>
<path d="M247 740C210 745 200 770 215 790C230 810 280 840 253 855"/>
<path d="M170 770C200 775 220 800 254 806"/>
<path d="M292 808C320 810 320 850 330 860"/>
<path d="M138 785C150 800 200 860 235 885C300 940 360 980 390 1020"/>
<path d="M0 645L95 770"/>
<path d="M190 872L253 870M190 905L253 875"/>
<path d="M208 885L550 878M190 908C400 905 700 900 866 895"/>
<path d="M313 870L344 868M366 866L374 842M412 840L434 840"/>
<path d="M470 840C520 840 560 825 585 822" stroke="#222"/>
<path d="M470 842C500 830 510 810 522 803M537 803L544 805M563 806L585 822"/>
<path d="M629 825C660 820 690 810 713 806M700 820C710 840 715 860 720 875M708 880L742 870"/>
<path d="M786 860C850 860 900 855 920 855"/>
<path d="M445 840C430 880 425 950 428 1020"/>
<path d="M530 1020C580 950 640 915 708 916M733 916L825 921M849 920L878 930M864 885L900 900M890 895C905 880 905 865 920 860"/>
<path d="M1022 855L1047 848M1081 850L1092 845M947 862L960 862M1136 842L1143 841M1170 841L1192 838M1047 860C1060 875 1075 880 1085 892"/>
<path d="M786 860C1000 850 1300 815 1560 800"/>
<path d="M891 878C1100 860 1300 850 1530 830"/>
<path d="M860 1020C1000 950 1150 920 1290 910"/>
<path d="M940 1020C1050 980 1150 950 1330 905"/>
<path d="M190 990L198 990M155 957C170 960 180 970 190 975"/>
</g>
<g class="y">
<rect x="267" y="287" width="43" height="68"/><rect x="398" y="291" width="43" height="76"/><rect x="611" y="618" width="45" height="62"/><rect x="606" y="697" width="45" height="60"/><rect x="293" y="722" width="42" height="33"/><rect x="95" y="769" width="43" height="32"/><rect x="585" y="808" width="44" height="33"/><rect x="742" y="847" width="44" height="43"/><rect x="960" y="846" width="62" height="33"/><rect x="1092" y="818" width="44" height="54"/><rect x="147" y="857" width="43" height="33"/><rect x="147" y="891" width="43" height="33"/><rect x="147" y="975" width="43" height="33"/>
<rect x="1164" y="72" width="43" height="32"/><rect x="1162" y="149" width="40" height="33"/><rect x="1295" y="158" width="93" height="34"/><rect x="1000" y="207" width="43" height="44"/><rect x="863" y="227" width="43" height="33"/><rect x="1293" y="221" width="58" height="31"/><rect x="1368" y="221" width="44" height="33"/><rect x="1207" y="260" width="44" height="16"/><rect x="1333" y="265" width="65" height="34"/><rect x="809" y="283" width="45" height="28"/><rect x="862" y="311" width="43" height="34"/><rect x="1424" y="208" width="105" height="48"/>
</g>
<path d="M611 618H656V625H611ZM606 697H651V704H606ZM1295 158H1388V166H1295ZM1000 207H1043V214H1000ZM863 227H906V233H863ZM1293 221H1351V227H1293ZM1333 265H1398V272H1333Z" fill="#6a6a30"/>
<g class="g">
<rect x="770" y="97" width="30" height="14"/><rect x="771" y="140" width="30" height="14"/><rect x="1113" y="83" width="14" height="9"/><rect x="1129" y="83" width="31" height="9"/><rect x="1110" y="160" width="15" height="9"/><rect x="1127" y="161" width="31" height="9"/><rect x="965" y="216" width="24" height="16"/><rect x="1072" y="227" width="28" height="11"/><rect x="1266" y="228" width="24" height="15"/><rect x="1294" y="196" width="24" height="15"/><rect x="1348" y="200" width="24" height="15"/><rect x="866" y="272" width="24" height="15"/><rect x="900" y="275" width="24" height="15"/><rect x="1220" y="235" width="36" height="7"/><rect x="802" y="278" width="58" height="6"/><rect x="855" y="304" width="55" height="6"/>
<rect x="235" y="370" width="24" height="15"/><rect x="280" y="373" width="37" height="21"/><rect x="360" y="376" width="38" height="21"/><rect x="196" y="430" width="24" height="15"/><rect x="283" y="482" width="37" height="20"/><rect x="361" y="488" width="38" height="21"/><rect x="389" y="514" width="24" height="14"/><rect x="66" y="470" width="26" height="20"/>
<rect x="370" y="630" width="38" height="22"/><rect x="438" y="656" width="24" height="14"/><rect x="469" y="658" width="28" height="11"/><rect x="506" y="658" width="28" height="11"/><rect x="559" y="647" width="35" height="22"/><rect x="440" y="687" width="22" height="14"/><rect x="558" y="683" width="35" height="21"/><rect x="247" y="730" width="34" height="21"/><rect x="344" y="856" width="22" height="21"/><rect x="374" y="830" width="38" height="21"/><rect x="434" y="830" width="36" height="21"/><rect x="544" y="798" width="19" height="16"/><rect x="678" y="868" width="30" height="26"/><rect x="708" y="910" width="25" height="13"/><rect x="825" y="914" width="24" height="15"/><rect x="878" y="925" width="24" height="15"/><rect x="866" y="881" width="25" height="26"/><rect x="136" y="667" width="60" height="7"/><rect x="136" y="676" width="70" height="7"/><rect x="141" y="684" width="60" height="9"/><rect x="810" y="878" width="54" height="9"/><rect x="1035" y="892" width="54" height="8"/>
</g>
<g class="p"><rect x="338" y="381" width="16" height="11"/><rect x="344" y="485" width="16" height="12"/><rect x="480" y="633" width="26" height="18"/><rect x="154" y="765" width="16" height="12"/></g>
<g class="d">
<rect x="1062" y="79" width="35" height="15"/><rect x="1061" y="154" width="35" height="14"/><rect x="422" y="517" width="32" height="11"/><rect x="254" y="797" width="38" height="21"/><rect x="258" y="833" width="28" height="9" rx="4"/><rect x="253" y="853" width="60" height="34"/><rect x="522" y="798" width="15" height="10"/><rect x="713" y="796" width="27" height="21"/><rect x="198" y="977" width="49" height="34"/><rect x="1202" y="235" width="18" height="7"/>
</g>
<g class="o"><rect x="920" y="852" width="27" height="21"/><rect x="1047" y="847" width="34" height="14"/><rect x="1143" y="836" width="27" height="11"/></g>
<rect x="115" y="953" width="40" height="8" class="n"/>
</g>

<!-- Zoom 9 region -->
<g class="z" transform="translate(1030 640) scale(.40816 .33333)">
<ellipse cx="177" cy="528" rx="22" ry="27" fill="#e050d8"/>
<g class="w">
<path d="M200 160C230 220 300 300 370 400C380 420 360 440 340 455"/>
<path d="M210 175C240 240 300 330 360 420C380 450 350 460 320 455"/>
<path d="M240 200C260 230 330 240 388 290C380 310 350 300 330 290"/>
<path d="M300 160C340 200 390 260 390 290C390 300 360 310 350 312"/>
<path d="M138 65C200 120 260 220 310 270C360 320 450 420 458 490C460 530 400 555 343 552"/>
<path d="M200 210C230 280 300 340 430 370"/>
<path d="M316 318C360 325 400 335 430 350M313 394L430 380M313 394C350 380 390 350 430 340M311 460C360 420 400 370 430 360M311 460C370 440 400 380 430 370M340 456C350 400 370 370 430 350M340 456C345 430 340 400 430 345"/>
<path d="M247 275C300 290 330 305 430 340M257 322L275 318M348 312L430 335M456 350L477 350"/>
<path d="M440 325C430 200 430 170 445 130"/>
<path d="M480 360C530 300 590 200 708 196"/>
<path d="M575 382L604 377M456 385L520 382M564 336C585 340 590 355 604 354"/>
<path d="M642 370C760 350 1000 280 1290 208"/>
<path d="M340 456C450 450 620 420 730 370C900 270 1050 220 1224 212"/>
<path d="M302 617C500 610 750 560 960 470C1150 370 1350 240 1548 180"/>
<path d="M302 617C500 615 800 560 1000 480C1180 390 1400 250 1550 185"/>
<path d="M310 682C500 680 800 630 1030 500C1200 400 1400 280 1568 225"/>
<path d="M310 682C600 670 900 580 1100 460C1250 360 1450 260 1568 232"/>
<path d="M302 617C330 590 340 520 340 456M310 682C340 640 340 540 342 460M245 546C290 545 320 510 340 460M248 547L302 553M149 543L212 546"/>
<path d="M248 622L261 620M146 632C170 630 180 618 208 620M148 660C180 660 180 680 208 680M248 680L269 684"/>
<path d="M160 390L211 395M247 395L272 394M156 458L202 461M239 462L270 461"/>
<path d="M190 271L198 271M155 238C170 238 180 250 190 258M136 307L151 310M194 316L222 320M194 344C210 340 215 325 222 325M194 352C210 350 215 330 225 330M155 580C170 570 180 565 190 560"/>
</g>
<g class="y"><rect x="151" y="301" width="43" height="33"/><rect x="152" y="367" width="43" height="13"/><rect x="105" y="527" width="43" height="33"/><rect x="111" y="562" width="43" height="33"/><rect x="158" y="556" width="44" height="7"/></g>
<g class="v"><rect x="150" y="341" width="43" height="8"/><rect x="150" y="351" width="43" height="7"/><rect x="103" y="629" width="43" height="8"/><rect x="105" y="657" width="43" height="7"/></g>
<g class="d"><rect x="222" y="307" width="35" height="31"/><rect x="275" y="310" width="41" height="15"/><rect x="329" y="308" width="19" height="9"/><rect x="211" y="388" width="36" height="15"/><rect x="272" y="387" width="41" height="15"/><rect x="430" y="325" width="26" height="62"/><rect x="202" y="455" width="37" height="15"/><rect x="270" y="454" width="41" height="15"/><rect x="212" y="532" width="34" height="29"/><rect x="302" y="549" width="41" height="15"/><rect x="208" y="614" width="40" height="16"/><rect x="261" y="613" width="41" height="15"/><rect x="208" y="673" width="40" height="16"/><rect x="269" y="678" width="41" height="15"/></g>
<g class="g"><rect x="477" y="343" width="50" height="15"/><rect x="542" y="326" width="22" height="21"/><rect x="604" y="350" width="38" height="48"/><rect x="520" y="379" width="55" height="7"/><rect x="107" y="386" width="54" height="8"/><rect x="106" y="454" width="50" height="8"/></g>
<rect x="110" y="303" width="26" height="7" fill="#111"/><rect x="157" y="526" width="41" height="7" fill="#777" stroke="#222"/>
</g>

<!-- Zoom 10 region -->
<g class="z" transform="translate(1500 620) scale(.33333)">
<g class="w">
<path d="M101 178C250 160 500 140 660 140"/>
<path d="M0 218C200 210 500 205 660 190"/>
<path d="M0 272C100 260 200 245 255 238"/>
<path d="M0 290C100 275 200 255 275 235"/>
<path d="M102 178L135 175M135 165L170 127M188 127L208 123M245 122L262 132M292 133L308 133M338 133L382 135"/>
<path d="M432 135C460 130 460 100 489 97"/>
<path d="M248 168L265 172M295 173L316 175M346 175L385 176"/>
<path d="M433 176C470 180 450 225 487 238"/>
<path d="M240 160C230 140 245 135 262 128M245 175C270 200 280 230 255 240M250 175C260 200 285 230 255 242"/>
<path d="M517 238L528 238M545 238L556 240M495 160L525 170L527 236M478 105C490 130 530 160 475 235M527 100C510 150 510 200 470 238M580 97L601 98M632 98L660 105"/>
<path d="M635 228C670 225 680 210 700 200"/>
<path d="M660 195C600 200 550 220 517 232" stroke="#222"/>
<path d="M712 110C735 110 730 150 748 165M715 182L748 180M713 145L748 172M715 245C735 240 730 210 748 195M794 180L808 180M840 180L855 180M713 200L748 185"/>
<path d="M712 140C800 135 900 133 1072 135M712 250C800 230 950 225 1079 230M934 170L1072 168M934 160L1072 160M934 182C980 170 1020 150 1072 145M934 178C1000 190 1040 200 1079 205M934 195L1079 195"/>
<path d="M0 432C150 340 350 260 487 238"/>
<path d="M0 462C100 400 350 270 487 240"/>
<path d="M0 462C150 370 400 300 660 255"/>
<path d="M0 492C150 400 350 320 660 257"/>
</g>
<g class="y"><rect x="49" y="157" width="52" height="42"/><rect x="660" y="94" width="52" height="30"/><rect x="661" y="127" width="52" height="33"/><rect x="662" y="165" width="52" height="33"/><rect x="661" y="238" width="52" height="33"/><rect x="855" y="140" width="79" height="83"/><rect x="837" y="615" width="146" height="42"/></g>
<g class="o"><rect x="382" y="127" width="50" height="15"/><rect x="385" y="168" width="48" height="15"/><rect x="262" y="123" width="30" height="21"/><rect x="265" y="163" width="30" height="21"/><rect x="208" y="115" width="37" height="15"/><rect x="212" y="161" width="36" height="16"/></g>
<g class="g"><rect x="489" y="90" width="30" height="15"/><rect x="551" y="89" width="30" height="15"/><rect x="601" y="92" width="30" height="15"/><rect x="487" y="231" width="30" height="15"/><rect x="556" y="235" width="30" height="15"/><rect x="605" y="221" width="30" height="15"/><rect x="459" y="155" width="36" height="10"/><rect x="378" y="157" width="67" height="7"/><rect x="308" y="126" width="30" height="15"/><rect x="316" y="168" width="30" height="15"/><rect x="120" y="124" width="68" height="7"/><rect x="135" y="172" width="68" height="7"/><rect x="136" y="233" width="68" height="7"/><rect x="169" y="260" width="28" height="14"/><rect x="88" y="279" width="68" height="7"/><rect x="808" y="173" width="32" height="14"/></g>
<g class="d"><rect x="527" y="95" width="15" height="8"/><rect x="528" y="236" width="16" height="8"/><rect x="217" y="234" width="36" height="21"/><rect x="748" y="159" width="46" height="48"/><rect x="1072" y="131" width="18" height="44"/><rect x="1110" y="136" width="36" height="35"/><rect x="1079" y="193" width="18" height="42"/><rect x="1117" y="196" width="35" height="35"/></g>
<path d="M1072 140H1090M1072 149H1090M1072 158H1090M1072 167H1090M1079 202H1097M1079 211H1097M1079 220H1097" stroke="#333"/>
</g>
<!-- nav widget -->
<path d="M1854.500 811A28 28 0 0 1 1884 772.500" fill="none" stroke="#000" stroke-width="5.500"/>
<path d="M1853 771L1862 775L1860 781L1855 779Z M1853 808L1860 814L1857 815L1853 811Z" fill="#000"/>
<circle cx="1880.500" cy="800" r="24" fill="url(#nav)" stroke="#fff" stroke-width="1.800"/>
<path d="M1865 785L1872 787L1867 792Z M1896 785L1889 787L1894 792Z M1865 815L1872 813L1867 808Z M1896 815L1889 813L1894 808Z" fill="#fff"/>

<!-- PENGUINO DIALOG -->
<rect x="561" y="113" width="464" height="500" fill="#000" opacity=".35" filter="url(#sh)"/>
<rect x="561" y="111" width="463" height="500" fill="#fff"/>
<rect x="561" y="111" width="463" height="38" fill="#40b0e2"/>
<text x="572" y="138" font-size="19" fill="#fff" opacity=".92" textLength="94" lengthAdjust="spacingAndGlyphs">PENGUINO</text>
<rect x="912" y="132" width="11" height="4" fill="#b8e2f5"/>
<rect x="955" y="125" width="9" height="9" fill="#40b0e2" stroke="#b8e2f5" stroke-width="2"/><path d="M954 125H965" stroke="#b8e2f5" stroke-width="3"/>
<path d="M997 125L1008 136M1008 125L997 136" stroke="#d4eefa" stroke-width="3"/>
<text x="574" y="182" font-size="18" font-weight="bold" fill="#111" textLength="43" lengthAdjust="spacingAndGlyphs">Start</text>
<text x="574" y="224" font-size="18" font-weight="bold" fill="#111" textLength="133" lengthAdjust="spacingAndGlyphs">Calculating Path</text>
<rect x="718" y="202" width="73" height="29" fill="#fff" stroke="#a59e92" stroke-width="3"/>
<rect x="722" y="206" width="55" height="21" fill="#40b0e2"/>
<rect x="776" y="201" width="16" height="31" fill="#000"/>
<text x="585" y="276" font-size="14.500" fill="#222" textLength="65" lengthAdjust="spacingAndGlyphs">Feed Rate</text>
<rect x="656" y="262" width="48" height="4" fill="#40b0e2"/><rect x="716" y="262" width="238" height="4" fill="#a0a0a0"/>
<rect x="705" y="254" width="10" height="20" rx="2" fill="#888"/>
<text x="960" y="276" font-size="14.500" fill="#222" textLength="24" lengthAdjust="spacingAndGlyphs">500</text>
<text x="585" y="326" font-size="14.500" fill="#222" textLength="69" lengthAdjust="spacingAndGlyphs">Resolution</text>
<rect x="661" y="312" width="80" height="4" fill="#40b0e2"/><rect x="754" y="312" width="192" height="4" fill="#a0a0a0"/>
<rect x="743" y="304" width="10" height="20" rx="2" fill="#888"/>
<text x="952" y="326" font-size="14.500" fill="#222" textLength="32" lengthAdjust="spacingAndGlyphs">2968</text>
<text x="574" y="370.500" font-size="18" font-weight="bold" fill="#111" textLength="145" lengthAdjust="spacingAndGlyphs">Generate Gcode</text>
<rect x="639" y="389" width="73" height="29" fill="#fff" stroke="#a59e92" stroke-width="3"/>
<rect x="654" y="393" width="54" height="21" fill="#a59e92"/>
<rect x="638" y="388" width="16" height="31" fill="#000"/>
<rect x="749.500" y="431.500" width="86" height="36" rx="4" fill="#f5f5f5" stroke="#ddd" stroke-width="1.500"/>
<text x="767" y="454" font-size="13" font-weight="bold" fill="#111" textLength="52" lengthAdjust="spacingAndGlyphs">Clear file</text>
<rect x="737.500" y="478.500" width="110" height="36" rx="4" fill="#f5f5f5" stroke="#ddd" stroke-width="1.500"/>
<text x="756" y="501" font-size="13" font-weight="bold" fill="#111" textLength="73" lengthAdjust="spacingAndGlyphs">Write to File</text>
</svg>
</body></html>
